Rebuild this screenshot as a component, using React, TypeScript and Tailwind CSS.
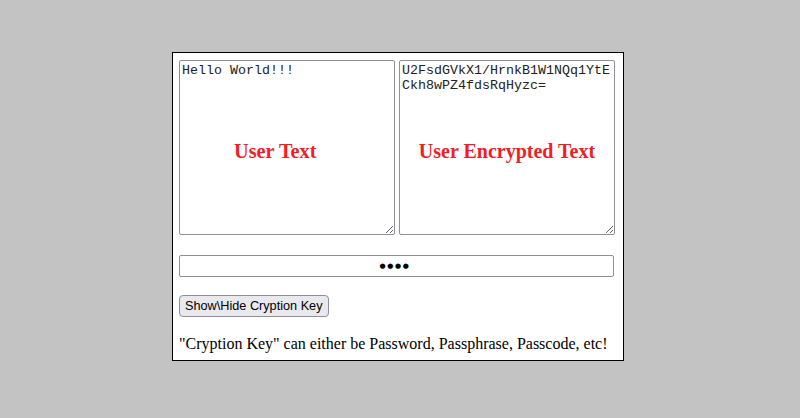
import React from "react";

export default function App() {
  return (
    <div className="w-[800px] h-[418px] bg-[#c3c3c3] overflow-hidden pt-[52px] pl-[172px]">
      <div
        className="w-[452px] h-[309px] border border-black bg-white pl-[6px] pt-[7px]"
        style={{ fontFamily: '"Liberation Serif", serif' }}
      >
        <div className="flex gap-[4px]">
          <div className="relative w-[216px] h-[175px]">
            <textarea
              className="block w-[216px] h-[175px] border border-[#8f8f9d] rounded-[2px] p-[2px] text-[13.33px] leading-[15px] text-[#222] bg-white outline-none resize"
              style={{ fontFamily: '"Liberation Mono", monospace' }}
              defaultValue="Hello World!!!"
            />
            <div className="absolute left-[55px] top-[79px] text-[20.3px] font-bold text-[#f21d25] pointer-events-none whitespace-nowrap leading-[24px]">
              User Text
            </div>
          </div>
          <div className="relative w-[216px] h-[175px]">
            <textarea
              className="block w-[216px] h-[175px] border border-[#8f8f9d] rounded-[2px] p-[2px] text-[13.33px] leading-[15px] text-[#222] bg-white outline-none resize break-all"
              style={{ fontFamily: '"Liberation Mono", monospace' }}
              defaultValue="U2FsdGVkX1/HrnkB1W1NQq1YtECkh8wPZ4fdsRqHyzc="
            />
            <div className="absolute inset-x-0 top-[79px] text-center text-[20px] font-bold text-[#f21d25] pointer-events-none whitespace-nowrap leading-[24px]">
              User Encrypted Text
            </div>
          </div>
        </div>
        <input
          type="text"
          readOnly
          aria-label="Cryption Key"
          value={"\u25CF\u25CF\u25CF\u25CF"}
          className="block mt-[20px] w-[435px] h-[22px] border border-[#8f8f9d] rounded-[2px] pl-[2px] pr-[5px] text-center text-[7px] tracking-[1.6px] text-black bg-white outline-none"
          style={{ fontFamily: '"DejaVu Sans", sans-serif' }}
        />
        <button
          className="block mt-[18px] h-[22px] px-[5px] border border-[#8f8f9d] rounded-[4px] bg-[#e9e9ed] text-[12.7px] leading-[18px] text-black"
          style={{ fontFamily: '"Liberation Sans", Arial, sans-serif' }}
        >
          Show\Hide Cryption Key
        </button>
        <p className="mt-[18px] text-[16px] leading-[18px] text-black whitespace-nowrap">
          "Cryption Key" can either be Password, Passphrase, Passcode, etc!
        </p>
      </div>
    </div>
  );
}
